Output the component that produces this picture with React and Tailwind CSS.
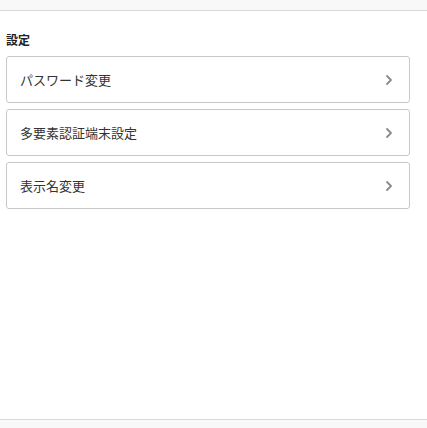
import React from 'react';

const items = ['パスワード変更', '多要素認証端末設定', '表示名変更'];

const Chevron = () => (
    <svg width="8" height="12" viewBox="0 0 8 12" fill="none">
        <polyline points="2,2 6,6 2,10" stroke="#8a8a8a" strokeWidth="1.8" strokeLinecap="round" strokeLinejoin="round" />
    </svg>
);

const App = () => {
    return (
        <div className="h-[428px] flex flex-col bg-white text-[#333]" style={{ fontFamily: '"Noto Sans CJK JP", "Noto Sans", sans-serif' }}>
            {/* header strip */}
            <div className="h-[11px] shrink-0 bg-[#f8f8f8] border-b border-[#d9d9d9]"></div>

            <div className="flex-1 pl-[6px] pr-[17px] pt-[20px]">
                <h2 className="text-[12px] leading-[18px] font-bold text-[#222] mb-[7px]">設定</h2>
                <div className="flex flex-col gap-[6px]">
                    {items.map((label) => (
                        <button
                            key={label}
                            className="h-[47px] w-full flex items-center justify-between pl-[13px] pr-[16px] border border-[#c8c8c8] rounded-[3px] bg-white text-left"
                        >
                            <span className="text-[13px] text-[#333]">{label}</span>
                            <Chevron />
                        </button>
                    ))}
                </div>
            </div>

            {/* footer strip */}
            <div className="h-[9px] shrink-0 bg-[#f8f8f8] border-t border-[#d9d9d9]"></div>
        </div>
    );
};

export default App;
